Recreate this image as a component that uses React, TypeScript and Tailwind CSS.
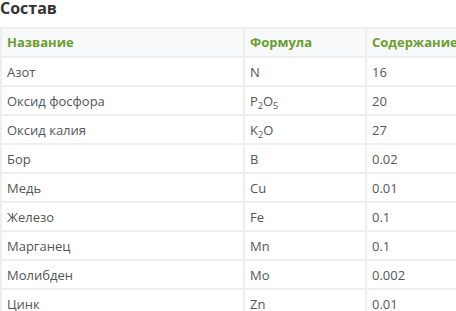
import React from "react";

const rows: [string, React.ReactNode, string][] = [
  ["Азот", "N", "16"],
  [
    "Оксид фосфора",
    <>
      P<sub className="text-[9px] align-[-1px]">2</sub>O<sub className="text-[9px] align-[-1px]">5</sub>
    </>,
    "20",
  ],
  [
    "Оксид калия",
    <>
      K<sub className="text-[9px] align-[-1px]">2</sub>O
    </>,
    "27",
  ],
  ["Бор", "B", "0.02"],
  ["Медь", "Cu", "0.01"],
  ["Железо", "Fe", "0.1"],
  ["Марганец", "Mn", "0.1"],
  ["Молибден", "Mo", "0.002"],
  ["Цинк", "Zn", "0.01"],
];

export default function App() {
  return (
    <div className="w-[456px] h-[311px] overflow-hidden bg-white font-['Open_Sans',sans-serif]">
      <h2 className="text-[16px] font-bold text-[#333] leading-[20px] -mt-[2px] mb-[9px]">
        Состав
      </h2>
      <table className="w-[488px] border-collapse text-[13px] text-[#555]">
        <thead>
          <tr className="bg-[#f7f9fa]">
            <th className="w-[243px] h-[29px] border-2 border-[#eceeef] px-[5px] text-left font-bold text-[#6c9d2f]">
              Название
            </th>
            <th className="w-[122px] h-[29px] border-2 border-[#eceeef] px-[5px] text-left font-bold text-[#6c9d2f]">
              Формула
            </th>
            <th className="h-[29px] border-2 border-[#eceeef] px-[5px] text-left font-bold text-[#6c9d2f]">
              Содержание
            </th>
          </tr>
        </thead>
        <tbody>
          {rows.map(([name, formula, value], i) => (
            <tr key={i}>
              <td className="h-[29px] border-2 border-[#eceeef] px-[5px] leading-[18px]">{name}</td>
              <td className="h-[29px] border-2 border-[#eceeef] px-[5px] leading-[18px]">{formula}</td>
              <td className="h-[29px] border-2 border-[#eceeef] px-[5px] leading-[18px]">{value}</td>
            </tr>
          ))}
        </tbody>
      </table>
    </div>
  );
}
